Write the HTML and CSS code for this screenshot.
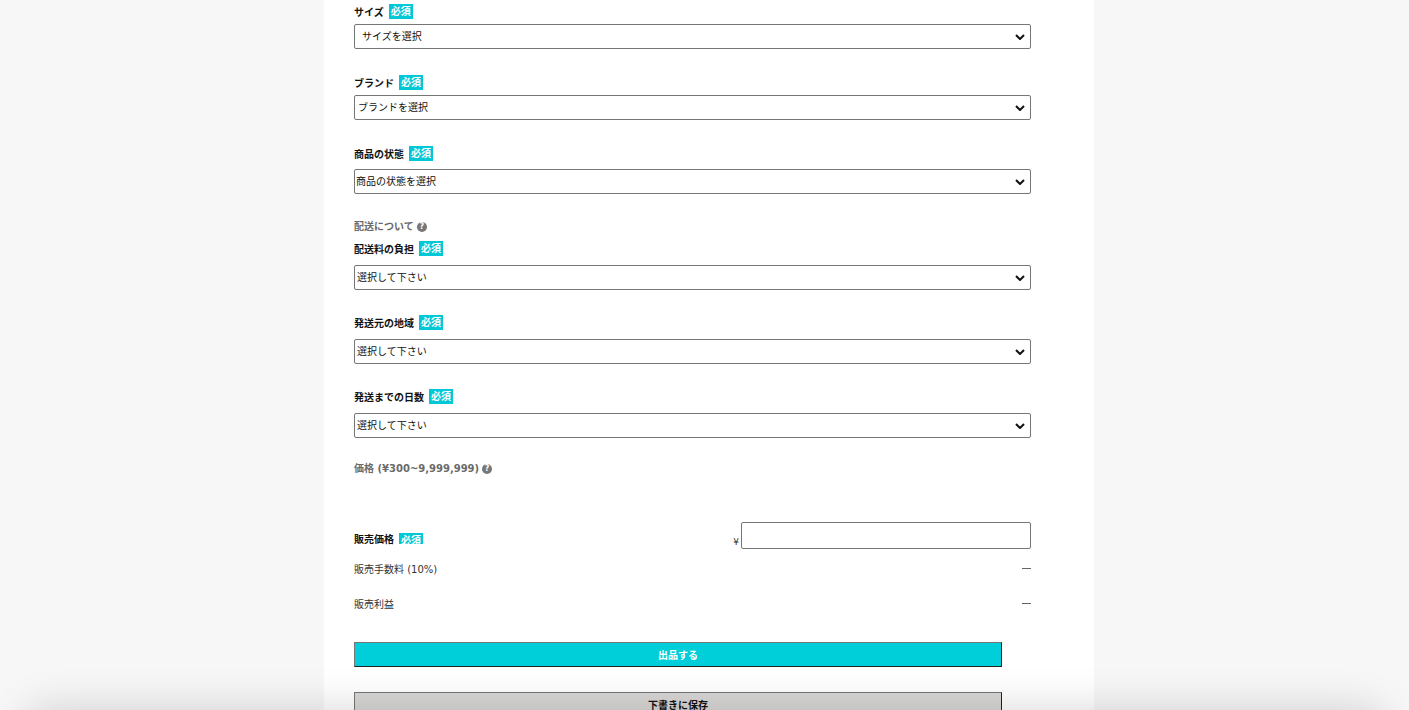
FILE: index.html
```html
<!DOCTYPE html>
<html lang="ja">
<head>
<meta charset="utf-8">
<title>出品</title>
<link rel="stylesheet" href="styles.css">
</head>
<body>
<main class="page">
  <form class="form">
    <div class="group group-top">
      <div class="field">
        <div class="label-row"><span class="label">サイズ</span><span class="badge">必須</span></div>
        <select class="select pad-8"><option>サイズを選択</option></select>
      </div>
      <div class="field">
        <div class="label-row"><span class="label">ブランド</span><span class="badge">必須</span></div>
        <select class="select pad-4"><option>ブランドを選択</option></select>
      </div>
      <div class="field field-wide">
        <div class="label-row"><span class="label">商品の状態</span><span class="badge">必須</span></div>
        <select class="select"><option>商品の状態を選択</option></select>
      </div>
    </div>

    <div class="section-title section-ship">配送について <span class="help">?</span></div>
    <div class="group group-ship">
      <div class="field">
        <div class="label-row"><span class="label">配送料の負担</span><span class="badge">必須</span></div>
        <select class="select pad-3"><option>選択して下さい</option></select>
      </div>
      <div class="field">
        <div class="label-row"><span class="label">発送元の地域</span><span class="badge">必須</span></div>
        <select class="select pad-3"><option>選択して下さい</option></select>
      </div>
      <div class="field">
        <div class="label-row"><span class="label">発送までの日数</span><span class="badge">必須</span></div>
        <select class="select pad-3"><option>選択して下さい</option></select>
      </div>
    </div>

    <div class="section-title section-price">価格 (¥300~9,999,999) <span class="help">?</span></div>

    <div class="price-row">
      <div class="label-row label-row-price"><span class="label">販売価格</span><span class="badge badge-cut"><span>必須</span></span></div>
      <div class="price-input"><span class="yen">¥</span><input class="input" type="text"></div>
    </div>
    <div class="info-row"><span>販売手数料 (10%)</span><span class="dash"></span></div>
    <div class="info-row"><span>販売利益</span><span class="dash"></span></div>

    <div class="actions">
      <button type="button" class="btn btn-primary">出品する</button>
      <button type="button" class="btn btn-secondary">下書きに保存</button>
    </div>
  </form>
</main>
<div class="bottom-shadow"></div>
</body>
</html>
```

FILE: styles.css
```css
html, body {
  margin: 0;
  padding: 0;
}
body {
  background: #f7f7f7;
  font-family: "DejaVu Sans", "Noto Sans CJK JP", sans-serif;
  font-size: 10px;
  color: #111;
  overflow: hidden;
  height: 710px;
  padding-left: 9px;
  box-sizing: border-box;
}
.page {
  width: 770px;
  margin: 0 auto;
  background: #fff;
  min-height: 710px;
  box-sizing: border-box;
  padding: 3px 30px 0 30px;
}
.form {
  width: 677px;
  display: flex;
  flex-direction: column;
}
.group {
  display: flex;
  flex-direction: column;
  gap: 25px;
}
.field {
  display: flex;
  flex-direction: column;
  gap: 5px;
}
.field-wide {
  gap: 8px;
}
.group-ship .field {
  gap: 9px;
}
.group-ship {
  gap: 24px;
}
.label-row {
  display: flex;
  align-items: center;
  gap: 5px;
  height: 16px;
}
.label {
  font-weight: bold;
  font-size: 10px;
  color: #111;
}
.badge {
  background: #00c8d7;
  color: #fff;
  font-weight: bold;
  font-size: 10px;
  line-height: 15px;
  height: 15px;
  padding: 0 2px;
  display: inline-block;
}
.select {
  appearance: none;
  -webkit-appearance: none;
  width: 677px;
  height: 25px;
  box-sizing: border-box;
  border: 1px solid #767676;
  border-radius: 2px;
  background: #fff url("data:image/svg+xml;utf8,<svg xmlns='http://www.w3.org/2000/svg' width='10' height='6' viewBox='0 0 10 6'><path d='M1 1 L5 5 L9 1' fill='none' stroke='%23111' stroke-width='2'/></svg>") no-repeat right 5px center;
  font-family: "DejaVu Sans", "Noto Sans CJK JP", sans-serif;
  font-size: 10px;
  color: #111;
  padding: 0 20px 0 1px;
  margin: 0;
}
.pad-8 { padding-left: 7px; }
.pad-4 { padding-left: 3px; }
.pad-3 { padding-left: 2px; }
.section-title {
  color: #6a6a6a;
  font-weight: bold;
  font-size: 10px;
  height: 12px;
  line-height: 12px;
  display: flex;
  align-items: center;
  gap: 3px;
  margin-top: 27px;
}
.section-ship {
  margin-bottom: 7px;
}
.help {
  display: inline-flex;
  align-items: center;
  justify-content: center;
  width: 10px;
  height: 10px;
  border-radius: 50%;
  background: #777;
  color: #fff;
  font-size: 8px;
  font-weight: bold;
  line-height: 1;
}
.section-price {
  margin-top: 25px;
  margin-bottom: 47px;
}
.price-row {
  display: flex;
  justify-content: space-between;
  align-items: flex-end;
  height: 27px;
}
.label-row-price {
  height: 12px;
  margin-bottom: 4px;
  align-items: flex-start;
}
.label-row-price .label {
  line-height: 12px;
  margin-top: 1px;
}
.badge-cut {
  height: 11px;
  overflow: hidden;
  line-height: 15px;
}
.price-input {
  display: flex;
  align-items: flex-end;
  gap: 2px;
}
.yen {
  font-size: 9px;
  color: #333;
  line-height: 10px;
  margin-bottom: 2px;
}
.input {
  width: 290px;
  height: 27px;
  box-sizing: border-box;
  border: 1px solid #767676;
  border-radius: 2px;
  margin: 0;
  padding: 0 4px;
}
.info-row {
  display: flex;
  justify-content: space-between;
  align-items: center;
  height: 16px;
  color: #333;
  font-size: 10px;
  margin-top: 11px;
}
.info-row + .info-row {
  margin-top: 19px;
}
.dash {
  width: 9px;
  height: 1px;
  background: #666;
}
.actions {
  display: flex;
  flex-direction: column;
  gap: 25px;
  margin-top: 31px;
}
.btn {
  width: 648px;
  height: 25px;
  box-sizing: border-box;
  border-style: solid;
  border-width: 1px;
  border-color: #767676 #222 #222 #767676;
  font-family: "DejaVu Sans", "Noto Sans CJK JP", sans-serif;
  font-size: 10px;
  font-weight: bold;
  padding: 0;
  margin: 0;
}
.btn-primary {
  background: #00cfd9;
  color: #fff;
}
.btn-secondary {
  background: #d8d7d6;
  color: #111;
}
.bottom-shadow {
  position: fixed;
  left: 20px;
  right: 20px;
  bottom: -60px;
  height: 60px;
  border-radius: 40px;
  box-shadow: 0 -4px 40px rgba(0, 0, 0, 0.14);
  background: #eee;
}
```
